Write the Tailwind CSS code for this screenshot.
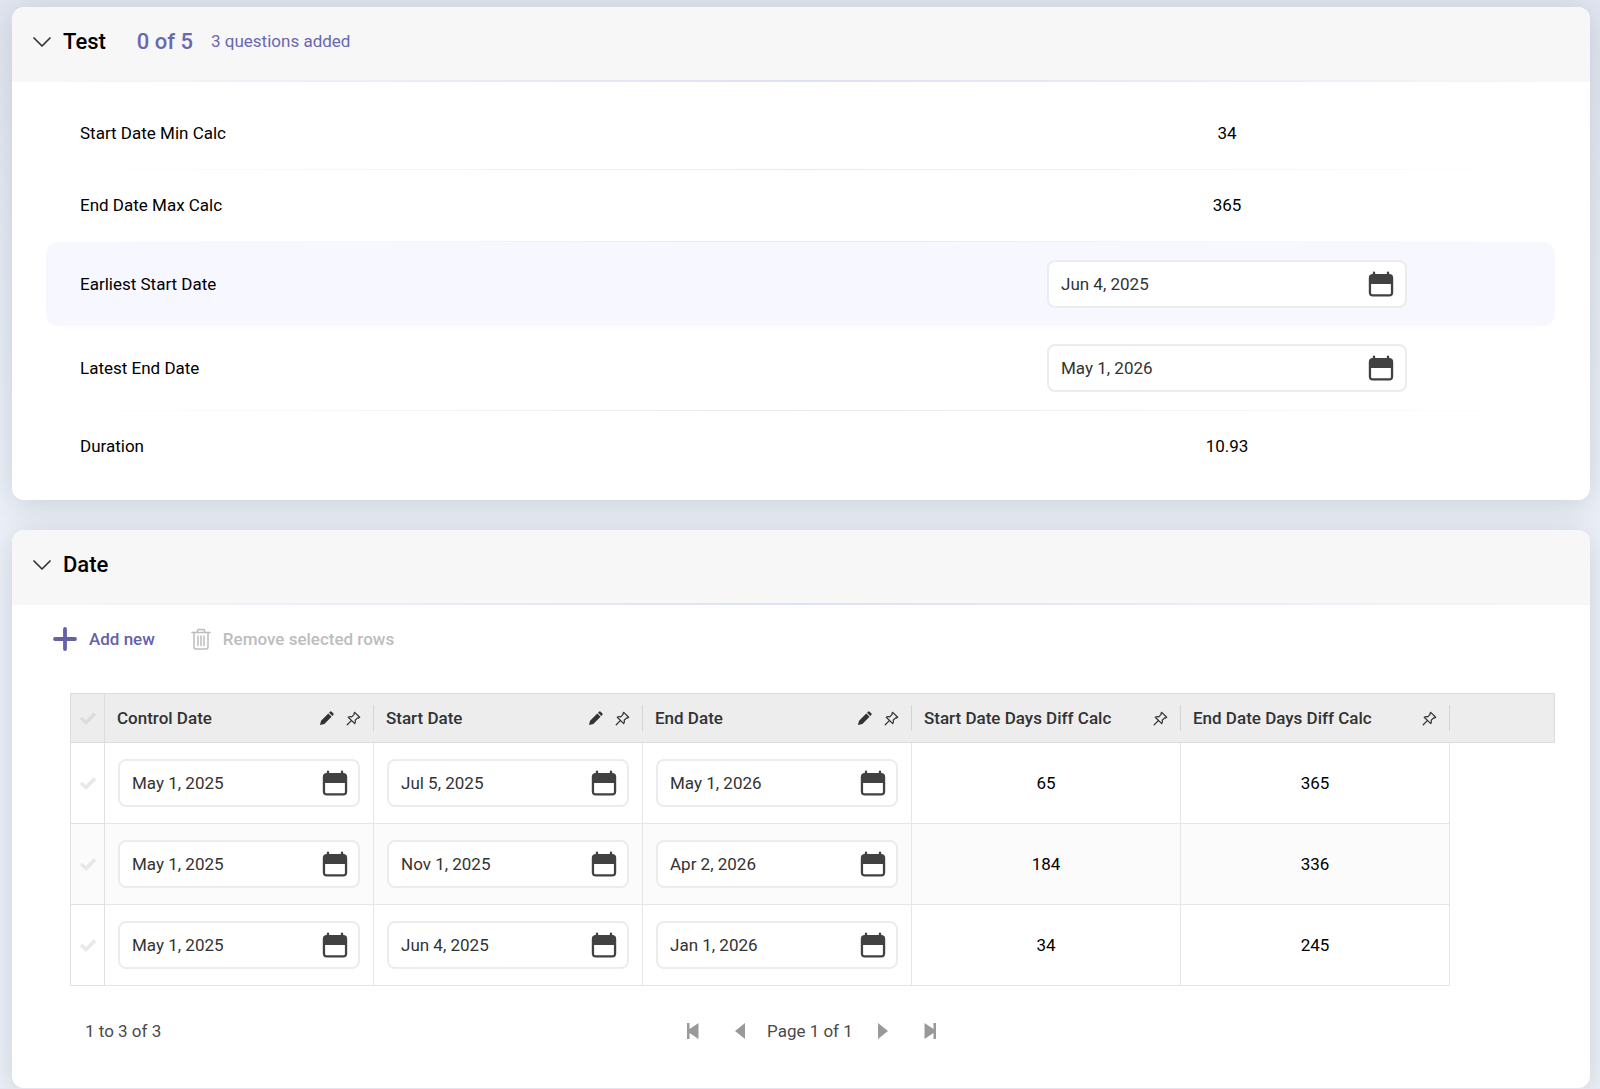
<!DOCTYPE html>
<html lang="en">
<head>
    <meta charset="UTF-8">
    <meta name="viewport" content="width=device-width, initial-scale=1.0">
    <title>Test - Date</title>
    <script src="https://cdn.jsdelivr.net/npm/@tailwindcss/browser@4"></script>
</head>
<body class="bg-linear-to-b from-[#e2e6f2] to-[#edf1fa] to-45% font-[Roboto,sans-serif] text-[17px] leading-6 text-black overflow-x-hidden">
    <!-- Icons -->
    <svg class="hidden">
        <symbol id="chevron" viewBox="0 0 18 10">
            <path d="M1 1l8 8 8-8" fill="none" stroke="currentColor" stroke-width="1.7" stroke-linecap="round" stroke-linejoin="round"/>
        </symbol>
        <symbol id="calendar" viewBox="0 0 26 26">
            <path d="M6 0.5a1.2 1.2 0 0 1 1.2 1.2V3h11.600V1.700a1.200 1.200 0 0 1 2.400 0V3a4 4 0 0 1 4 4v14.500a4 4 0 0 1-4 4H4.800a4 4 0 0 1-4-4V7a4 4 0 0 1 4-4V1.700A1.200 1.200 0 0 1 6 .5zM3.100 13v9a1.300 1.300 0 0 0 1.300 1.300h17.200a1.300 1.300 0 0 0 1.300-1.300v-9z" fill="currentColor" fill-rule="evenodd"/>
        </symbol>
        <symbol id="pencil" viewBox="0 0 16 16">
            <path d="M1 15l1.200-4.700 7.700-7.700 3.500 3.500-7.700 7.700zM10.700 1.800l1-1a1.300 1.300 0 0 1 1.800 0l1.700 1.700a1.300 1.300 0 0 1 0 1.800l-1 1z" fill="currentColor"/>
        </symbol>
        <symbol id="pin" viewBox="0 0 16 16">
            <path d="M9.300 1.400l5.300 5.300-1.200.8-1-.2-2.600 2.600c.5 1.300.3 2.600-.5 3.600L2.400 6.700c1-.8 2.400-1 3.700-.5l2.600-2.600-.2-1zM5.700 10.200L1.300 14.700" fill="none" stroke="currentColor" stroke-width="1.300" stroke-linejoin="round" stroke-linecap="round"/>
        </symbol>
        <symbol id="check" viewBox="0 0 18 14">
            <path d="M2 7l5 4.500L16 2.500" fill="none" stroke="currentColor" stroke-width="3.600"/>
        </symbol>
        <symbol id="plus" viewBox="0 0 24 24">
            <path d="M12 2v20M2 12h20" fill="none" stroke="currentColor" stroke-width="3.800" stroke-linecap="round"/>
        </symbol>
        <symbol id="trash" viewBox="0 0 20 22">
            <path d="M1 4.500h18M6 4.500l1-3h6l1 3M3 4.500v14.500a2 2 0 0 0 2 2h10a2 2 0 0 0 2-2V4.500M7 8v9.500M10 8v9.500M13 8v9.500" fill="none" stroke="currentColor" stroke-width="1.500" stroke-linecap="round" stroke-linejoin="round"/>
        </symbol>
        <symbol id="first" viewBox="0 0 12 16">
            <path d="M0 0h2.500v6L11.500 0v16L2.500 10v6H0z" fill="currentColor"/>
        </symbol>
        <symbol id="prev" viewBox="0 0 10 16">
            <path d="M10 0v16L0 8z" fill="currentColor"/>
        </symbol>
    </svg>

    <main class="flex flex-col gap-[30px] pt-[7px] pr-[10px] pl-3">
        <!-- Test -->
        <section class="rounded-xl bg-white shadow-[0_4px_32px_rgba(105,118,110,0.27)]">
            <header class="rounded-t-xl bg-[#f7f7f7]">
                <div class="flex h-[73px] items-center pb-[3px] pl-[21px]">
                    <button type="button" aria-label="Collapse Test" class="mr-3 text-[#333]"><svg class="h-[10px] w-[18px]"><use href="#chevron"/></svg></button>
                    <h2 class="text-[22px] font-medium">Test</h2>
                    <span class="ml-[31px] text-[22px] font-medium text-[#6a67ae]">0 of 5</span>
                    <span class="ml-[18px] pb-[2px] text-[#6a67ae]">3 questions added</span>
                </div>
                <div class="h-[2px] bg-linear-to-r from-transparent via-[#dde1f8] to-transparent"></div>
            </header>
            <div class="pt-4 pr-[35px] pb-[18px] pl-[34px]">
                <div class="flex h-[71px] items-center pr-[148px] pb-[2px] pl-[34px]">
                    <span class="flex-1">Start Date Min Calc</span>
                    <output class="w-[360px] text-center">34</output>
                </div>
                <div class="h-px bg-linear-to-r from-transparent via-[#e9e9eb] to-transparent"></div>
                <div class="flex h-[71px] items-center pr-[148px] pb-[2px] pl-[34px]">
                    <span class="flex-1">End Date Max Calc</span>
                    <output class="w-[360px] text-center">365</output>
                </div>
                <div class="h-px bg-linear-to-r from-transparent via-[#e9e9eb] to-transparent"></div>
                <div class="flex h-[84px] items-center rounded-xl bg-[#f7f8ff] pr-[148px] pl-[34px]">
                    <label for="earliest" class="flex-1">Earliest Start Date</label>
                    <div class="flex h-12 w-[360px] items-center rounded-lg border-2 border-[#ececec] bg-white pr-[11px] pl-3 text-[#333]">
                        <input id="earliest" type="text" value="Jun 4, 2025" class="min-w-0 flex-1 outline-none">
                        <button type="button" aria-label="Open calendar" class="text-[#414141]"><svg class="size-[26px]"><use href="#calendar"/></svg></button>
                    </div>
                </div>
                <div class="flex h-[84px] items-center pr-[148px] pl-[34px]">
                    <label for="latest" class="flex-1">Latest End Date</label>
                    <div class="flex h-12 w-[360px] items-center rounded-lg border-2 border-[#ececec] bg-white pr-[11px] pl-3 text-[#333]">
                        <input id="latest" type="text" value="May 1, 2026" class="min-w-0 flex-1 outline-none">
                        <button type="button" aria-label="Open calendar" class="text-[#414141]"><svg class="size-[26px]"><use href="#calendar"/></svg></button>
                    </div>
                </div>
                <div class="h-px bg-linear-to-r from-transparent via-[#e9e9eb] to-transparent"></div>
                <div class="flex h-[71px] items-center pr-[148px] pb-[2px] pl-[34px]">
                    <span class="flex-1">Duration</span>
                    <output class="w-[360px] text-center">10.93</output>
                </div>
            </div>
        </section>

        <!-- Date -->
        <section class="rounded-xl bg-white shadow-[0_4px_32px_rgba(105,118,110,0.27)]">
            <header class="rounded-t-xl bg-[#f7f7f7]">
                <div class="flex h-[73px] items-center pb-[3px] pl-[21px]">
                    <button type="button" aria-label="Collapse Date" class="mr-3 text-[#333]"><svg class="h-[10px] w-[18px]"><use href="#chevron"/></svg></button>
                    <h2 class="text-[22px] font-medium">Date</h2>
                </div>
                <div class="h-[2px] bg-linear-to-r from-transparent via-[#dde1f8] to-transparent"></div>
            </header>

            <div class="flex h-[88px] items-start gap-9 pt-[22px] pl-[41px] font-medium">
                <button type="button" class="flex items-center gap-3 text-[#6361aa]">
                    <svg class="size-6"><use href="#plus"/></svg>
                    Add new
                </button>
                <button type="button" disabled class="flex items-center gap-3 text-[#bdbdbd]">
                    <svg class="h-[22px] w-5"><use href="#trash"/></svg>
                    Remove selected rows
                </button>
            </div>

            <div class="pr-[35px] pl-[58px]">
                <table class="w-full table-fixed border-separate border-spacing-0">
                    <colgroup>
                        <col class="w-[35px]">
                        <col class="w-[269px]">
                        <col class="w-[269px]">
                        <col class="w-[269px]">
                        <col class="w-[269px]">
                        <col class="w-[269px]">
                        <col>
                    </colgroup>
                    <thead class="bg-[#ededed] text-left text-[#333]">
                        <tr class="h-[50px]">
                            <th class="border border-[#dcdcdc] p-0 text-[#dcdcdc]">
                                <label class="flex justify-center"><input type="checkbox" aria-label="Select all rows" class="sr-only"><svg class="h-[14px] w-[18px]"><use href="#check"/></svg></label>
                            </th>
                            <th class="border-y border-[#dcdcdc] p-0 font-medium">
                                <div class="flex h-[26px] items-center border-r border-[#d4d4d4] px-3">
                                    <span class="flex-1">Control Date</span>
                                    <svg class="mr-3 size-[15px]"><use href="#pencil"/></svg>
                                    <button type="button" aria-label="Pin column"><svg class="size-[15px]"><use href="#pin"/></svg></button>
                                </div>
                            </th>
                            <th class="border-y border-[#dcdcdc] p-0 font-medium">
                                <div class="flex h-[26px] items-center border-r border-[#d4d4d4] px-3">
                                    <span class="flex-1">Start Date</span>
                                    <svg class="mr-3 size-[15px]"><use href="#pencil"/></svg>
                                    <button type="button" aria-label="Pin column"><svg class="size-[15px]"><use href="#pin"/></svg></button>
                                </div>
                            </th>
                            <th class="border-y border-[#dcdcdc] p-0 font-medium">
                                <div class="flex h-[26px] items-center border-r border-[#d4d4d4] px-3">
                                    <span class="flex-1">End Date</span>
                                    <svg class="mr-3 size-[15px]"><use href="#pencil"/></svg>
                                    <button type="button" aria-label="Pin column"><svg class="size-[15px]"><use href="#pin"/></svg></button>
                                </div>
                            </th>
                            <th class="border-y border-[#dcdcdc] p-0 font-medium">
                                <div class="flex h-[26px] items-center border-r border-[#d4d4d4] px-3">
                                    <span class="flex-1">Start Date Days Diff Calc</span>
                                    <button type="button" aria-label="Pin column"><svg class="size-[15px]"><use href="#pin"/></svg></button>
                                </div>
                            </th>
                            <th class="border-y border-[#dcdcdc] p-0 font-medium">
                                <div class="flex h-[26px] items-center border-r border-[#d4d4d4] px-3">
                                    <span class="flex-1">End Date Days Diff Calc</span>
                                    <button type="button" aria-label="Pin column"><svg class="size-[15px]"><use href="#pin"/></svg></button>
                                </div>
                            </th>
                            <td class="border-y border-r border-[#dcdcdc] p-0"></td>
                        </tr>
                    </thead>
                    <tbody id="rows"></tbody>
                </table>
            </div>

            <footer class="grid h-[102px] grid-cols-[1fr_auto_1fr] items-center pr-[52px] pb-3 pl-[73px] text-[#4a4a4a]">
                <span>1 to 3 of 3</span>
                <nav aria-label="Pagination" class="flex items-center text-[#999]">
                    <button type="button" aria-label="First page" class="mr-9"><svg class="h-4 w-3"><use href="#first"/></svg></button>
                    <button type="button" aria-label="Previous page" class="mr-[22px]"><svg class="h-4 w-[10px]"><use href="#prev"/></svg></button>
                    <span class="min-w-[89px] text-[#4a4a4a]">Page 1 of 1</span>
                    <button type="button" aria-label="Next page" class="ml-[22px]"><svg class="h-4 w-[10px] rotate-180"><use href="#prev"/></svg></button>
                    <button type="button" aria-label="Last page" class="ml-9"><svg class="h-4 w-3 rotate-180"><use href="#first"/></svg></button>
                </nav>
            </footer>
        </section>
    </main>

    <script>
        const rows = [
            { dates: ['May 1, 2025', 'Jul 5, 2025', 'May 1, 2026'], diffs: [65, 365] },
            { dates: ['May 1, 2025', 'Nov 1, 2025', 'Apr 2, 2026'], diffs: [184, 336] },
            { dates: ['May 1, 2025', 'Jun 4, 2025', 'Jan 1, 2026'], diffs: [34, 245] }
        ];
        const columns = ['Control Date', 'Start Date', 'End Date'];

        // Date picker cell
        function dateCell(value, label) {
            return `<td class="border-r border-b border-[#e6e6e6] px-[13px] py-0">
                <div class="flex h-12 items-center rounded-lg border-2 border-[#ececec] bg-white pr-[10px] pl-3 text-[#333]">
                    <input type="text" aria-label="${label}" value="${value}" class="min-w-0 flex-1 outline-none">
                    <button type="button" aria-label="Open calendar" class="text-[#414141]"><svg class="size-[26px]"><use href="#calendar"/></svg></button>
                </div>
            </td>`;
        }

        document.getElementById('rows').innerHTML = rows.map((row, i) => `
            <tr class="h-[81px] ${i % 2 ? 'bg-[#fbfbfb]' : 'bg-white'}">
                <td class="border-x border-b border-[#e0e0e0] p-0 text-[#e8e8e8]">
                    <label class="flex justify-center"><input type="checkbox" aria-label="Select row ${i + 1}" class="sr-only"><svg class="h-[14px] w-[18px]"><use href="#check"/></svg></label>
                </td>
                ${row.dates.map((d, c) => dateCell(d, columns[c])).join('')}
                ${row.diffs.map(n => `<td class="border-r border-b border-[#e6e6e6] p-0 text-center">${n}</td>`).join('')}
                <td class="bg-white p-0"></td>
            </tr>`).join('');
    </script>
</body>
</html>
